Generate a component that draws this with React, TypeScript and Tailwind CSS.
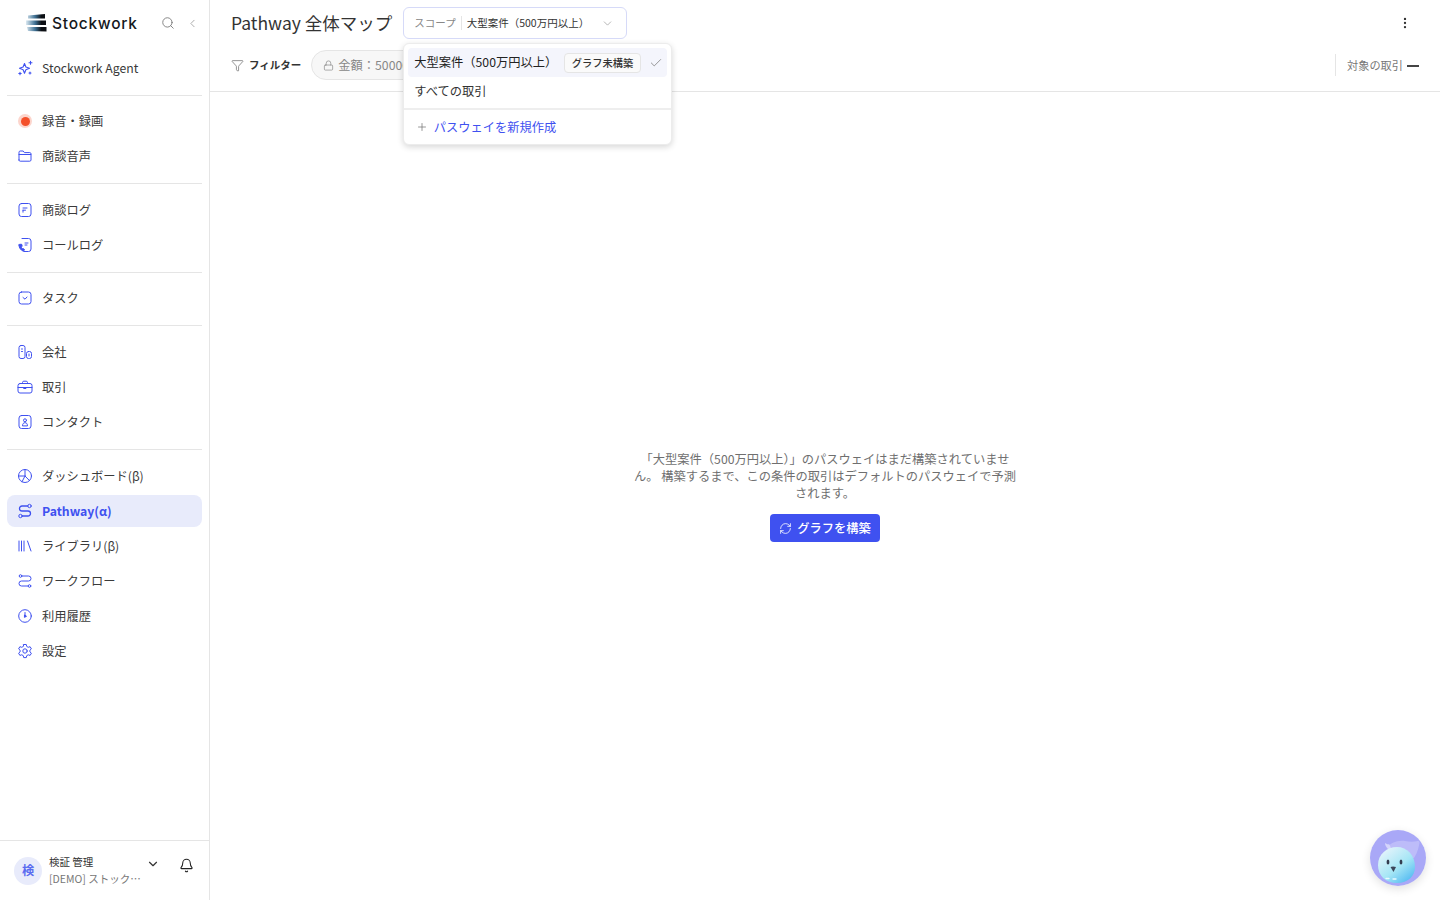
import type { ReactNode } from 'react'
import { Bell, Check, ChevronDown, ChevronLeft, Filter, Lock, MoreVertical, Plus, RefreshCw, Search } from 'lucide-react'

const font = { fontFamily: '"Noto Sans CJK JP", "Noto Sans", sans-serif' }

function Ico({ children }: { children: ReactNode }) {
  return (
    <svg width="16" height="16" viewBox="0 0 16 16" fill="none" stroke="#3f51f0" strokeWidth="1" strokeLinecap="round" strokeLinejoin="round">
      {children}
    </svg>
  )
}

const icons: Record<string, ReactNode> = {
  agent: (
    <svg width="16" height="16" viewBox="0 0 16 16" fill="none" stroke="#3f51f0" strokeWidth="1.1" strokeLinejoin="round">
      <path d="M7.500 3.500 8.900 7 12.500 8.300 8.900 9.700 7.500 13.200 6.100 9.700 2.500 8.300 6.100 7Z" />
      <path d="M13.500 1.200v3M12 2.700h3M3 12.200v2.600M1.800 13.500h2.400M13 12v2M12 13h2" strokeLinecap="round" />
    </svg>
  ),
  rec: (
    <span className="flex h-[14px] w-[14px] items-center justify-center rounded-full bg-[#fcd5cc]">
      <span className="h-[9px] w-[9px] rounded-full bg-[#f4502a]" />
    </span>
  ),
  folder: (
    <Ico>
      <path d="M2 12V4.2C2 3.5 2.5 3 3.2 3h3l1.2 1.6h5.4c.7 0 1.2.5 1.2 1.2V12c0 .7-.5 1.2-1.2 1.2H3.200C2.500 13.200 2 12.700 2 12Z" />
      <path d="M2 6.500h11.800" />
    </Ico>
  ),
  log: (
    <Ico>
      <rect x="2" y="1.500" width="12" height="13" rx="2.500" />
      <path d="M6 6h4M6 8.200h2.500M6 8.200v2" />
    </Ico>
  ),
  call: (
    <Ico>
      <path d="M5 1.500h6.500A2.500 2.500 0 0 1 14 4v8a2.500 2.500 0 0 1-2.500 2.500H7" />
      <path d="M8 6h3M8 8h2" />
      <path d="M2 8c0 3 1.800 5.200 4.500 6.300l1-1.800-1.500-1-1 .5c-.5-.6-.8-1.300-.8-2l1-.7-.5-2H3c-.6 0-1 .2-1 .700Z" fill="#3f51f0" />
    </Ico>
  ),
  task: (
    <Ico>
      <rect x="2" y="2" width="12" height="12" rx="2.500" />
      <path d="m6 7.500 2 1.700 2-2.200" />
    </Ico>
  ),
  company: (
    <Ico>
      <rect x="2" y="1.500" width="6" height="13" rx="2" />
      <rect x="9.500" y="7.500" width="5" height="7" rx="2" />
      <path d="M4.500 5h1M4.500 7.500h1M12 10v2" />
    </Ico>
  ),
  deal: (
    <Ico>
      <rect x="1" y="4.500" width="14" height="9.500" rx="2" />
      <path d="M5.500 4.500V3.500c0-.8.500-1.300 1.300-1.300h2.400c.8 0 1.300.5 1.300 1.300v1M1 8.500h14" />
      <path d="M7 8.500h2v1H7z" fill="#3f51f0" />
    </Ico>
  ),
  contact: (
    <Ico>
      <rect x="2" y="1.500" width="12" height="13" rx="2.500" />
      <circle cx="8" cy="6.300" r="1.500" />
      <path d="M5.500 11.500c0-1.700 1-2.800 2.500-2.800s2.500 1.100 2.500 2.800Z" />
    </Ico>
  ),
  dash: (
    <Ico>
      <circle cx="8" cy="8" r="6.500" />
      <path d="M8 1.500V8l4.500 4.600M8 8H1.500M8 8l-3 5.800" />
    </Ico>
  ),
  path: (
    <Ico>
      <circle cx="12.500" cy="3" r="1.700" />
      <circle cx="3.500" cy="13" r="1.700" />
      <path d="M10.800 3H5a2.500 2.500 0 0 0 0 5h6a2.500 2.500 0 0 1 0 5H5.200" strokeWidth="1.300" />
    </Ico>
  ),
  library: (
    <Ico>
      <path d="M2 3v10M4.500 3v10M7 3v10M10.500 3l3.500 10" />
    </Ico>
  ),
  flow: (
    <Ico>
      <circle cx="3.500" cy="3" r="1.300" />
      <circle cx="12.500" cy="13" r="1.300" />
      <path d="M5 3h6.500a2.500 2.500 0 0 1 0 5h-7a2.500 2.500 0 0 0 0 5H11" />
    </Ico>
  ),
  history: (
    <Ico>
      <circle cx="8" cy="8" r="6.300" />
      <path d="M8 4.500V8" />
      <path d="M7.800 7.200 9.500 8.300 7.800 9.200Z" fill="#3f51f0" />
    </Ico>
  ),
  settings: (
    <Ico>
      <path d="M6.700 1.500h2.600l.4 1.900 1.500.9 1.900-.6 1.300 2.200-1.500 1.300v1.700l1.500 1.300-1.300 2.200-1.900-.6-1.500.9-.4 1.900H6.700l-.4-1.900-1.500-.9-1.900.6-1.300-2.200 1.500-1.300V7.200L1.600 5.900l1.300-2.200 1.900.6 1.500-.9Z" />
      <circle cx="8" cy="8" r="2.200" />
    </Ico>
  ),
}

type NavItem = { label: string; icon: string; active?: boolean }

const groups: NavItem[][] = [
  [{ label: '録音・録画', icon: 'rec' }, { label: '商談音声', icon: 'folder' }],
  [{ label: '商談ログ', icon: 'log' }, { label: 'コールログ', icon: 'call' }],
  [{ label: 'タスク', icon: 'task' }],
  [{ label: '会社', icon: 'company' }, { label: '取引', icon: 'deal' }, { label: 'コンタクト', icon: 'contact' }],
  [
    { label: 'ダッシュボード(β)', icon: 'dash' },
    { label: 'Pathway(α)', icon: 'path', active: true },
    { label: 'ライブラリ(β)', icon: 'library' },
    { label: 'ワークフロー', icon: 'flow' },
    { label: '利用履歴', icon: 'history' },
    { label: '設定', icon: 'settings' },
  ],
]

function NavRow({ item }: { item: NavItem }) {
  return (
    <div
      className={`flex h-[32px] items-center gap-[9px] rounded-lg pl-[10px] text-[12.250px] ${
        item.active ? 'bg-[#e8ebfb] font-bold text-[#3f51f0]' : 'text-[#3a3a3a]'
      }`}
    >
      <span className="flex w-[16px] justify-center">{icons[item.icon]}</span>
      <span>{item.label}</span>
    </div>
  )
}

function Logo() {
  return (
    <svg width="22" height="18" viewBox="0 0 22 18">
      <defs>
        <linearGradient id="lg" x1="0" x2="1" y1="0" y2="0">
          <stop offset="0" stopColor="#dbe9f2" />
          <stop offset="0.45" stopColor="#3d6f92" />
          <stop offset="0.75" stopColor="#0c0f14" />
        </linearGradient>
      </defs>
      <path d="M3 1.500 20 0v4.500H3Z M1 6.500h20v4.500H1Z M2 13h19.500v4.500L3 17Z" fill="url(#lg)" />
    </svg>
  )
}

function Sidebar() {
  return (
    <aside className="flex h-full w-[210px] shrink-0 flex-col border-r border-[#e5e5e5]">
      <div className="flex h-[46px] items-center pl-[25px]">
        <Logo />
        <span className="ml-[5px] pt-[1px] text-[15.500px] font-medium tracking-[0.750px] text-[#15181d]" style={{ fontFamily: 'Inter, sans-serif' }}>
          Stockwork
        </span>
        <Search className="ml-[23px] text-[#777]" size={14} strokeWidth={1.500} />
        <ChevronLeft className="ml-[11px] text-[#999]" size={13} strokeWidth={1.500} />
      </div>
      <div className="flex flex-1 flex-col px-[7px]">
        <div className="mt-[5.750px]">
          <NavRow item={{ label: 'Stockwork Agent', icon: 'agent' }} />
        </div>
        {groups.map((g, i) => (
          <div key={i} className="mt-[11px] border-t border-[#e5e5e5] pt-[9.500px] last:pt-[10px]">
            <div className="flex flex-col gap-[3px]">
              {g.map((item) => (
                <NavRow key={item.label} item={item} />
              ))}
            </div>
          </div>
        ))}
      </div>
      <div className="relative flex h-[60px] items-center border-t border-[#e5e5e5] pl-[14px]">
        <span className="flex h-[28px] w-[28px] items-center justify-center rounded-full bg-[#e8ebfb] text-[12.250px] font-bold text-[#5a6cf0]">
          検
        </span>
        <div className="ml-[7px] w-[94px]">
          <div className="text-[10.500px] leading-[17px] text-[#333]">検証 管理</div>
          <div className="truncate pb-[2px] text-[10.500px] leading-[17px] text-[#777]">[DEMO] ストックワーク</div>
        </div>
        <ChevronDown className="mb-[14px] ml-[3px] text-[#333]" size={14} strokeWidth={2} />
        <Bell className="mb-[10px] ml-[19px] text-[#222]" size={15} strokeWidth={1.700} />
      </div>
    </aside>
  )
}

function ScopeMenu() {
  return (
    <div className="absolute left-0 top-[36px] z-10 w-[269px] rounded-md border border-[#ececec] bg-white shadow-[0_2px_6px_rgba(0,0,0,0.16)]">
      <div className="px-[4px] pb-[3px] pt-[4px]">
        <div className="flex h-[29px] items-center rounded bg-[#f4f5fc] pl-[6px] text-[12.250px] text-[#222]">
          <span className="whitespace-nowrap">大型案件（500万円以上）</span>
          <span className="ml-[7px] flex h-[20px] shrink-0 items-center whitespace-nowrap rounded border border-[#e5e5e5] bg-[#fafafa] px-[6.500px] text-[10.250px] font-medium text-[#333]">
            グラフ未構築
          </span>
          <Check className="ml-[8px] shrink-0 text-[#888]" size={14} strokeWidth={1.500} />
        </div>
        <div className="flex h-[28px] items-center pl-[6px] text-[12.250px] text-[#333]">すべての取引</div>
      </div>
      <div className="flex h-[36px] items-center border-t-2 border-[#eeeeee] pl-[12px] text-[12.250px] text-[#3f51f0]">
        <Plus className="text-[#777]" size={12} strokeWidth={1.500} />
        <span className="ml-[5.500px]">パスウェイを新規作成</span>
      </div>
    </div>
  )
}

function Header() {
  return (
    <header className="h-[92px] shrink-0 border-b border-[#e5e5e5]">
      <div className="flex h-[46px] items-center pl-[21px] pr-[28px]">
        <h1 className="text-[17.500px] font-normal text-[#333]">Pathway 全体マップ</h1>
        <div className="relative ml-[11px]">
          <div className="flex h-[32px] w-[224px] items-center rounded-md border border-[#d6daf8] pl-[10px] text-[10.500px]">
            <span className="text-[#888]">スコープ</span>
            <span className="mx-[5px] h-[14px] w-px bg-[#e5e5e5]" />
            <span className="text-[#333]">大型案件（500万円以上）</span>
            <ChevronDown className="ml-auto mr-[12px] text-[#999]" size={13} strokeWidth={1.300} />
          </div>
          <ScopeMenu />
        </div>
        <MoreVertical className="ml-auto text-[#333]" size={14} strokeWidth={2} />
      </div>
      <div className="flex h-[38px] items-center pl-[21px] pr-[21px]">
        <Filter className="text-[#666]" size={13} strokeWidth={1.300} />
        <span className="ml-[5px] text-[10.500px] font-semibold text-[#333]">フィルター</span>
        <div className="ml-[10px] flex h-[30px] w-[200px] items-center rounded-full border border-[#e5e5e5] bg-[#f7f7f7] pl-[11px] text-[12.250px] text-[#888]">
          <Lock size={11} strokeWidth={1.500} />
          <span className="ml-[4px]">金額：5000000</span>
        </div>
        <div className="ml-auto flex h-[22px] items-center border-l border-[#e5e5e5] pl-[11px] text-[11.200px] text-[#777]">
          対象の取引
          <span className="ml-[4px] mt-[2px] h-[2px] w-[12px] bg-[#444]" />
        </div>
      </div>
    </header>
  )
}

function Bird() {
  return (
    <div className="absolute bottom-[14px] right-[14px] h-[56px] w-[56px] rounded-full shadow-[0_3px_10px_rgba(0,0,0,0.12)]">
      <svg width="56" height="56" viewBox="0 0 56 56">
        <defs>
          <linearGradient id="body" x1="0.1" x2="0.85" y1="0.1" y2="1">
            <stop offset="0" stopColor="#e6f4fb" />
            <stop offset="0.55" stopColor="#a5e6f5" />
            <stop offset="1" stopColor="#4fb8f2" />
          </linearGradient>
          <clipPath id="round">
            <circle cx="28" cy="28" r="27" />
          </clipPath>
        </defs>
        <circle cx="28" cy="28" r="28" fill="#a9a8f7" />
        <g clipPath="url(#round)">
          <path d="M17 18c3-5 10-8 18-7 5 1 12 1 15-1-1 6-2 12-6 18L30 30Z" fill="#bdbcf9" />
          <path d="M18 19c-2-2-3-4-3-6 2 1 3 2 4 1 1 2 2 3 2 5Z" fill="#d5d5fb" />
          <path d="M8 35c0-11 9-18 19-18s18 8 18 20c0 9-7 16-18 16S8 46 8 35Z" fill="url(#body)" />
          <ellipse cx="18" cy="32" rx="1.400" ry="2.600" fill="#333c4f" />
          <ellipse cx="31" cy="32" rx="1.400" ry="2.600" fill="#333c4f" />
          <path d="M20.500 37c1.500-.8 3.500-.8 5.500 0l-2.500 5Z" fill="#3c465a" />
          <path d="M16 48.500h3M23 49h3" stroke="#e9fbff" strokeWidth="1.300" strokeLinecap="round" />
        </g>
      </svg>
    </div>
  )
}

export default function App() {
  return (
    <div className="relative flex h-[900px] w-[1440px] overflow-hidden bg-white" style={font}>
      <Sidebar />
      <main className="flex min-w-0 flex-1 flex-col">
        <Header />
        <div className="flex flex-1 flex-col items-center pt-[359px]">
          <p className="w-[385px] text-center text-[12.250px] leading-[17px] text-[#6f6f6f]">
            「大型案件（500万円以上）」のパスウェイはまだ構築されていません。 構築するまで、この条件の取引はデフォルトのパスウェイで予測されます。
          </p>
          <button className="mt-[12px] flex h-[28px] w-[110px] items-center justify-center gap-[5px] rounded bg-[#3f51f0] text-[12.250px] font-medium text-white">
            <RefreshCw size={13} strokeWidth={1.500} />
            グラフを構築
          </button>
        </div>
      </main>
      <Bird />
    </div>
  )
}
